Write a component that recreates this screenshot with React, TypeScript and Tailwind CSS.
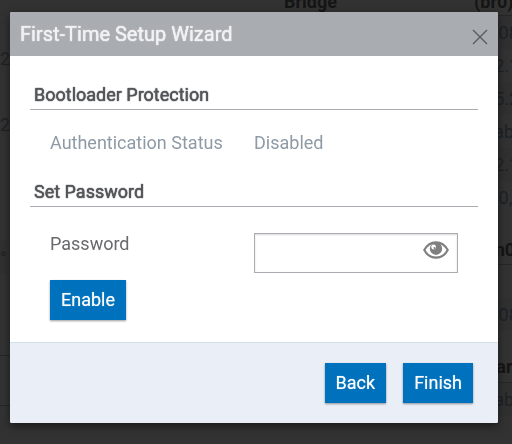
import { useState } from "react";

const bridgeRows = ["00:08", "192.1", "255.2", "Enabled", "192.1", "00:0,"];

const buttonClass =
  "h-10 bg-[#0071bc] px-[11px] text-lg text-white shadow-[0_1px_2px_rgba(0,0,0,0.4)] [text-shadow:0_0_1px_rgba(255,255,255,0.6)]";

function StatusPage() {
  return (
    <main
      aria-hidden="true"
      className="grid h-screen grid-cols-[234px_1fr] overflow-hidden bg-[#333] text-lg text-[#1d2227]"
    >
      <div className="h-[440px] bg-[#323232] pt-[42px]">
        <p className="h-[33px] leading-[33px]">27</p>
        <p className="mt-[33px] h-[33px] leading-[33px]">2</p>
        <p className="mt-[99px] h-[33px] bg-[#303030] leading-[37px]">°</p>
        <div className="mt-[82px] h-[51px] border-y border-[#252525]" />
      </div>
      <div className="h-[440px] bg-[#323232] pl-[50px]">
        <div className="grid h-4 grid-cols-[190px_1fr] border-b border-[#262626] font-bold leading-[4px] text-[#151515]">
          <span>Bridge</span>
          <span>(br0)</span>
        </div>
        <div className="pl-[190px]">
          {bridgeRows.map((value, index) => (
            <p key={index} className="h-[33px] leading-[34px] odd:bg-[#303030]">
              {value}
            </p>
          ))}
          <p className="mt-5 h-[31px] border-b border-[#262626] font-bold leading-[32px] text-[#151515]">(lan0)</p>
          <p className="mt-[33px] h-[33px] bg-[#303030] leading-[33px]">00:08</p>
          <p className="mt-5 h-[32px] border-b border-[#262626] font-bold leading-[32px] text-[#151515]">Guard</p>
          <p className="h-[33px] bg-[#303030] leading-[33px]">Enabled</p>
        </div>
      </div>
    </main>
  );
}

function SectionTitle({ children }: { children: string }) {
  return (
    <h3 className="border-b border-[#a9acb1] pl-1 text-lg font-normal text-[#55565a] [text-shadow:0_0_1px_#55565a,0_0_1px_#55565a]">
      {children}
    </h3>
  );
}

function EyeIcon() {
  return (
    <svg viewBox="0 0 26 18" className="h-[18px] w-[26px]" aria-hidden="true">
      <path
        d="M1.3 9C4 4 8 1.3 13 1.3S22 4 24.7 9C22 14 18 16.7 13 16.7S4 14 1.3 9Z"
        fill="none"
        stroke="#808080"
        strokeWidth="2.2"
        strokeLinejoin="round"
      />
      <circle cx="13" cy="7.7" r="6.2" fill="#808080" />
      <circle cx="10.6" cy="6" r="2.4" fill="#fff" />
      <circle cx="11.5" cy="6.9" r="1" fill="#808080" />
    </svg>
  );
}

export default function App() {
  const [visible, setVisible] = useState(false);

  return (
    <div className="font-[Roboto,'Liberation_Sans',sans-serif]">
      <StatusPage />
      <div className="fixed inset-0 pt-3 pr-3.5 pl-2.5">
        <div
          role="dialog"
          aria-labelledby="wizard-title"
          className="overflow-hidden rounded-xs bg-white shadow-[0_3px_9px_rgba(0,0,0,0.5)]"
        >
          <header className="flex h-11 items-center justify-between bg-[#a9acb1] px-2.5">
            <h2
              id="wizard-title"
              className="text-xl font-normal text-[#f0f1f2] [text-shadow:0_0_1px_#f0f1f2,0_0_1px_#f0f1f2]"
            >
              First-Time Setup Wizard
            </h2>
            <button type="button" aria-label="Close" className="pt-1.5">
              <svg viewBox="0 0 16 16" className="size-4" fill="none" stroke="#55585d" strokeWidth="1.3">
                <path d="M1 1l14 14M15 1L1 15" />
              </svg>
            </button>
          </header>
          <form onSubmit={(event) => event.preventDefault()}>
            <div className="px-5 pt-[25px] pb-[22px]">
              <SectionTitle>Bootloader Protection</SectionTitle>
              <div className="grid grid-cols-2 px-5 pt-[19px] pb-[21px] text-lg text-[#8e9aa6]">
                <span>Authentication Status</span>
                <span>Disabled</span>
              </div>
              <SectionTitle>Set Password</SectionTitle>
              <div className="px-5 pt-[26px]">
                <div className="grid grid-cols-2 items-start">
                  <label htmlFor="password" className="text-lg leading-[22px] text-[#68696c]">
                    Password
                  </label>
                  <div className="flex h-10 items-center border border-[#a9acb1] shadow-[inset_0_1px_2px_rgba(0,0,0,0.15)]">
                    <input
                      id="password"
                      type={visible ? "text" : "password"}
                      className="h-full min-w-0 flex-1 bg-transparent px-2 text-lg outline-none"
                    />
                    <button
                      type="button"
                      aria-label="Show password"
                      onClick={() => setVisible(!visible)}
                      className="px-2 pb-1.5"
                    >
                      <EyeIcon />
                    </button>
                  </div>
                </div>
                <button type="button" className={`mt-[7px] ${buttonClass}`}>
                  Enable
                </button>
              </div>
            </div>
            <footer className="flex justify-end gap-[17px] border-t border-[#d5dfe8] bg-[#eaeff7] py-5 pr-[25px] pl-5">
              <button type="button" className={buttonClass}>
                Back
              </button>
              <button type="submit" className={buttonClass}>
                Finish
              </button>
            </footer>
          </form>
        </div>
      </div>
    </div>
  );
}
